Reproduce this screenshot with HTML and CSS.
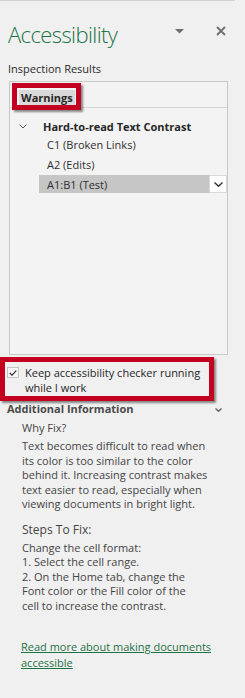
FILE: index.html
```html
<!DOCTYPE html>
<html lang="en">
<head>
<meta charset="utf-8">
<title>Accessibility</title>
<link rel="stylesheet" href="styles.css">
</head>
<body>
<div class="pane">
  <div class="header">
    <h1 class="title">Accessibility</h1>
    <div class="header-actions">
      <svg class="menu-icon" width="9" height="5" viewBox="0 0 9 5"><path d="M0 0H9L4.5 4.6Z" fill="#6e6e6e"/></svg>
      <svg class="close-icon" width="10" height="10" viewBox="0 0 10 10"><path d="M1 1L9 9M9 1L1 9" stroke="#6e6e6e" stroke-width="1.8"/></svg>
    </div>
  </div>
  <div class="section-label">Inspection Results</div>
  <div class="results">
    <div class="results-head"><span class="results-title">Warnings</span></div>
    <div class="tree">
      <div class="group-row">
        <svg class="chev" width="8" height="5" viewBox="0 0 8 5"><path d="M0.5 0.5L4 4L7.5 0.5" fill="none" stroke="#555" stroke-width="1"/></svg>
        <span class="group-name">Hard-to-read Text Contrast</span>
      </div>
      <div class="items">
        <div class="item">C1 (Broken Links)</div>
        <div class="item">A2 (Edits)</div>
        <div class="item selected">
          <span class="item-name">A1:B1 (Test)</span>
          <span class="item-menu"><svg width="9" height="5" viewBox="0 0 9 5"><path d="M0.5 0.5L4.5 4.3L8.5 0.5" fill="none" stroke="#333" stroke-width="1.4"/></svg></span>
        </div>
      </div>
    </div>
  </div>
  <label class="keep-running">
    <span class="checkbox"><svg width="8" height="6" viewBox="0 0 8 6"><path d="M0.7 3L3 5.2L7.3 0.7" fill="none" stroke="#333" stroke-width="1.2"/></svg></span>
    <span class="keep-text">Keep accessibility checker running<br>while I work</span>
  </label>
  <div class="info-head">
    <span>Additional Information</span>
    <svg class="info-chev" width="7" height="4" viewBox="0 0 7 4"><path d="M0.5 0.5L3.5 3.3L6.5 0.5" fill="none" stroke="#666" stroke-width="1.4"/></svg>
  </div>
  <div class="info-body">
    <div class="info-sub">Why Fix?</div>
    <p class="info-text">Text becomes difficult to read when<br>its color is too similar to the color<br>behind it. Increasing contrast makes<br>text easier to read, especially when<br>viewing documents in bright light.</p>
    <div class="info-steps">Steps To Fix:</div>
    <p class="info-text steps-text">Change the cell format:<br>1. Select the cell range.<br>2. On the Home tab, change the<br>Font color or the Fill color of the<br>cell to increase the contrast.</p>
    <a class="info-link" href="#">Read more about making documents<br>accessible</a>
  </div>
</div>
</body>
</html>
```

FILE: styles.css
```css
*, *::before, *::after { box-sizing: border-box; }
html, body { margin: 0; padding: 0; }
body {
  background: #f0f0f0;
  font-family: "Open Sans", "Noto Sans", sans-serif;
  font-size: 11px;
  color: #333;
  width: 245px;
  height: 698px;
  overflow: hidden;
}
.pane {
  width: 235px;
  border-top: 1px solid #d2d2d2;
}
.header {
  display: flex;
  align-items: flex-start;
  padding: 19px 9px 0 8px;
}
.title {
  margin: 0;
  font-size: 22px;
  font-weight: 300;
  line-height: 28px;
  letter-spacing: -0.6px;
  color: #217346;
}
.header-actions {
  margin-left: auto;
  display: flex;
  align-items: center;
  gap: 32px;
  margin-top: 6px;
  height: 10px;
}
.section-label {
  margin-top: 13px;
  padding-left: 8px;
  line-height: 15px;
  color: #2b2b2b;
}
.results {
  margin: 5px 0 0 9px;
  width: 219px;
  height: 274px;
  border: 1px solid #c8c8c8;
  background: #f3f3f3;
}
.results-head {
  padding: 8px 0 2px 9px;
  border-bottom: 1px solid #d6d6d6;
}
.results-title {
  position: relative;
  display: inline-block;
  padding: 0 2px;
  line-height: 15px;
  font-weight: 700;
  color: #262626;
  background: #d9d9d9;
}
.results-title::after {
  content: "";
  position: absolute;
  top: -7px;
  left: -7px;
  right: -6px;
  bottom: -5px;
  border: 5px solid #c3001f;
  box-shadow: 2px 2px 2px rgba(0, 0, 0, 0.45);
}
.tree {
  padding-top: 9px;
}
.group-row {
  display: flex;
  align-items: center;
  height: 18px;
  padding-left: 9px;
}
.group-name {
  margin-left: 16px;
  font-weight: 700;
  color: #262626;
}
.items {
  margin-left: 29px;
  display: flex;
  flex-direction: column;
  gap: 2px;
}
.item {
  display: flex;
  align-items: center;
  height: 18px;
  padding-left: 8px;
  color: #2f2f2f;
}
.item.selected {
  background: #c6c6c6;
}
.item-name {
  flex: 1;
}
.item-menu {
  width: 18px;
  height: 18px;
  background: #fff;
  border: 1px solid #d8d8d8;
  display: flex;
  align-items: center;
  justify-content: center;
}
.keep-running {
  position: relative;
  display: flex;
  align-items: flex-start;
  margin: 10px 0 6px 0;
  padding-left: 7px;
  line-height: 15px;
  color: #262626;
}
.keep-running::after {
  content: "";
  position: absolute;
  top: -8px;
  left: 0;
  width: 214px;
  height: 44px;
  border: 5px solid #c3001f;
  box-shadow: 2px 2px 2px rgba(0, 0, 0, 0.45);
}
.checkbox {
  width: 12px;
  height: 11px;
  margin-top: 2px;
  margin-right: 6px;
  border: 1px solid #c4c4c4;
  background: #f7f7f7;
  display: flex;
  align-items: center;
  justify-content: center;
}
.info-head {
  display: flex;
  align-items: center;
  justify-content: space-between;
  padding: 0 13px 0 7px;
  line-height: 15px;
  font-weight: 700;
  color: #4a4a4a;
}
.info-chev {
  margin-top: 3px;
}
.info-body {
  padding-left: 22px;
  color: #444;
}
.info-sub {
  margin-top: 4px;
  line-height: 15px;
}
.info-text {
  margin: 4px 0 0 0;
  line-height: 14.5px;
}
.info-steps {
  margin-top: 10px;
  font-size: 12px;
  line-height: 16px;
}
.steps-text {
  margin-top: 3px;
  line-height: 14.6px;
}
.info-link {
  display: block;
  margin-top: 26px;
  margin-left: -1px;
  line-height: 15.6px;
  color: #1e7145;
  text-decoration: underline;
}
```
